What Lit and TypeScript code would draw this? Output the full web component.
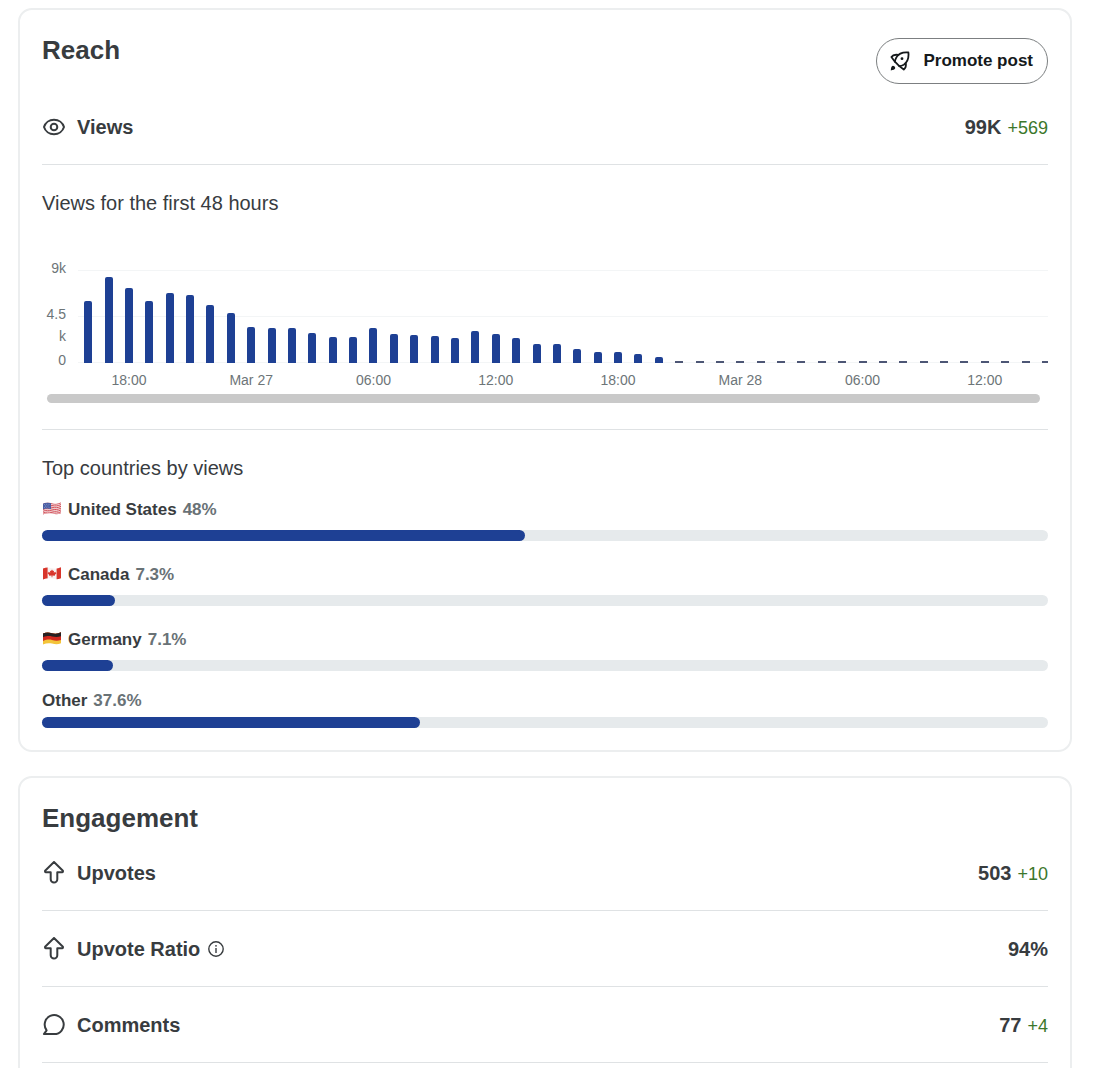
import { LitElement, html, svg, css, nothing } from "lit";
import { customElement, property } from "lit/decorators.js";

const MAX_VIEWS = 9;

/* Thousands of views per hour, starting at 16:00 on the first day. */
const HOURLY_VIEWS = [
  6.0, 8.3, 7.3, 6.0, 6.8, 6.6, 5.6, 4.8, 3.5, 3.4, 3.4, 2.9, 2.5, 2.5, 3.4, 2.8,
  2.7, 2.6, 2.4, 3.1, 2.8, 2.4, 1.8, 1.8, 1.4, 1.1, 1.1, 0.9, 0.6,
  ...new Array(19).fill(0),
];

const TICKS: Record<number, string> = {
  2: "18:00",
  8: "Mar 27",
  14: "06:00",
  20: "12:00",
  26: "18:00",
  32: "Mar 28",
  38: "06:00",
  44: "12:00",
};

const WAVE = "M1 2.6C4 1.2 7 1.4 10 2.2S16 2.8 19 1.2V12.2C16 13.8 13 13.4 10 12.6S4 12.2 1 13.6Z";

const flags: Record<string, unknown> = {
  us: svg`
    <clipPath id="us"><path d=${WAVE} /></clipPath>
    <g clip-path="url(#us)">
      <rect width="20" height="15" fill="#f3e6e6" />
      <g fill="none" stroke="#d4505a" stroke-width="1">
        <path d="M1 3.1C4 1.7 7 1.9 10 2.7S16 3.3 19 1.7" />
        <path d="M1 4.9C4 3.5 7 3.7 10 4.5S16 5.1 19 3.5" />
        <path d="M1 6.7C4 5.3 7 5.5 10 6.3S16 6.9 19 5.3" />
        <path d="M1 8.5C4 7.1 7 7.3 10 8.1S16 8.7 19 7.1" />
        <path d="M1 10.3C4 8.9 7 9.1 10 9.9S16 10.5 19 8.9" />
        <path d="M1 12.1C4 10.7 7 10.9 10 11.7S16 12.3 19 10.7" />
        <path d="M1 13.6C4 12.2 7 12.4 10 13.2S16 13.8 19 12.2" />
      </g>
      <path d="M1 2.4C4 1.2 7 1.4 9 2V8C6 7.2 4 7.2 1 8.2Z" fill="#4a5fa5" />
      <g fill="#c9d2ec">
        <circle cx="2.6" cy="3.6" r=".4" /><circle cx="4.8" cy="3.2" r=".4" />
        <circle cx="7" cy="3.3" r=".4" /><circle cx="3.7" cy="5" r=".4" />
        <circle cx="6" cy="4.9" r=".4" /><circle cx="2.6" cy="6.4" r=".4" />
        <circle cx="4.8" cy="6.1" r=".4" /><circle cx="7" cy="6.2" r=".4" />
      </g>
    </g>`,
  ca: svg`
    <clipPath id="ca"><path d=${WAVE} /></clipPath>
    <g clip-path="url(#ca)">
      <rect width="20" height="15" fill="#f7f2f1" />
      <rect width="5.6" height="15" fill="#d8352b" />
      <rect x="14.6" width="5.4" height="15" fill="#d8352b" />
      <path fill="#d8352b" d="M10 3.6l1 1.5 1-.4-.2 2 1.500-1 .5 1 .8.2-1.800 2.200.2.700-2.600-.2v1.700h-.800V9.600l-2.600.2.2-.7L5.400 6.900l.8-.2.500-1L8.200 6.700 8 4.700l1 .4z" />
    </g>`,
  de: svg`
    <clipPath id="de"><path d=${WAVE} /></clipPath>
    <g clip-path="url(#de)">
      <rect width="20" height="15" fill="#f3c43a" />
      <path fill="#d3291f" d="M0 0H20V8.600C16 10.200 13 9.800 10 9S4 8.600 0 10.400Z" />
      <path fill="#262223" d="M0 0H20V4.800C16 6.400 13 6 10 5.400S4 5 0 6.600Z" />
    </g>`,
};

const icons: Record<string, unknown> = {
  views: svg`
    <path d="M2 12C3.300 7.800 7.300 4.800 12 4.800s8.700 3 10 7.200c-1.300 4.200-5.300 7.200-10 7.200s-8.700-3-10-7.200Z" />
    <circle cx="12" cy="12" r="3.300" />`,
  upvote: svg`
    <path d="M12 1 20.900 9.700Q21.200 11.200 20.200 11.200H15.300V18.300a3.300 3.300 0 0 1-6.600 0V11.200H3.800Q2.800 11.200 3.100 9.700Z" />`,
  comment: svg`
    <path d="M12.200 21.100H1.900L4.600 17.300A9.500 9.500 0 1 1 12.200 21.100Z" />`,
};

const rocket = html`
  <svg class="rocket" viewBox="0 0 20 20" aria-hidden="true">
    <g fill="none" stroke="currentColor" stroke-width="1.800" stroke-linejoin="round" stroke-linecap="round">
      <path d="M18.400 1.500C12.800 1 8.600 2.600 6.400 6.400Q5 9 4.900 10.700L9.300 15.100Q11.500 15 13.800 13.700C17.400 11.200 19 7.200 18.400 1.500Z" />
      <path d="M8.400 4C5.300 3.400 2.600 4.200 1.400 6L4.900 10.700" />
      <path d="M15.800 12.100c.5 2.800-.3 5-2 6.400L9.300 15.100" />
    </g>
    <circle cx="12" cy="7.700" r="1.400" fill="currentColor" />
    <path fill="currentColor" d="M2.800 14.800c1.400 0 2.600 1.200 2.400 2.500-.2 1.300-2.200 1.900-4.400 2.100.1-2.300.6-4.300 2-4.600Z" />
  </svg>`;

@customElement("metric-row")
class MetricRow extends LitElement {
  @property() icon = "";
  @property() label = "";
  @property() value = "";
  @property() delta = "";
  @property({ type: Boolean }) info = false;

  static styles = css`
    :host {
      display: flex;
      align-items: center;
      justify-content: space-between;
      box-sizing: border-box;
      height: 76px;
      border-bottom: 1px solid #dfe2e4;
    }
    .name {
      display: flex;
      align-items: center;
      font-size: 20px;
      line-height: 24px;
      font-weight: 700;
    }
    .icon {
      width: 24px;
      height: 24px;
      margin-right: 11px;
      fill: none;
      stroke: currentColor;
      stroke-width: 2;
      stroke-linejoin: round;
      stroke-linecap: round;
    }
    .info {
      display: flex;
      margin: 0 0 0 8px;
      padding: 0;
      border: 0;
      background: none;
      color: inherit;
      cursor: pointer;
    }
    .info svg {
      width: 16px;
      height: 16px;
    }
    .figures {
      display: flex;
      align-items: baseline;
      gap: 6px;
    }
    .value {
      font-size: 20px;
      line-height: 24px;
      font-weight: 700;
    }
    .delta {
      font-size: 18px;
      line-height: 20px;
      color: #3c772b;
    }
  `;

  render() {
    return html`
      <div class="name">
        <svg class="icon" viewBox="0 0 24 24" aria-hidden="true">${icons[this.icon]}</svg>
        <span>${this.label}</span>
        ${this.info
          ? html`<button class="info" type="button" aria-label="About ${this.label}">
              <svg viewBox="0 0 16 16" aria-hidden="true">
                <circle cx="8" cy="8" r="7.200" fill="none" stroke="currentColor" stroke-width="1.400" />
                <circle cx="8" cy="4.800" r=".9" fill="currentColor" />
                <path d="M8 7v5" stroke="currentColor" stroke-width="1.400" />
              </svg>
            </button>`
          : nothing}
      </div>
      <div class="figures">
        <span class="value">${this.value}</span>
        ${this.delta ? html`<span class="delta">${this.delta}</span>` : nothing}
      </div>
    `;
  }
}

@customElement("views-chart")
class ViewsChart extends LitElement {
  static styles = css`
    :host {
      display: block;
      color: #6d7578;
      font-size: 14px;
    }
    .chart {
      display: flex;
      gap: 12px;
    }
    .axis {
      display: grid;
      grid-template-rows: 46px 46px 22px;
      width: 24px;
      line-height: 22px;
      text-align: right;
      word-break: break-all;
    }
    .plot {
      flex: 1;
      min-width: 0;
      overflow: hidden;
      padding-top: 13px;
    }
    .canvas {
      height: 93px;
      box-sizing: border-box;
      background:
        linear-gradient(#f3f5f6, #f3f5f6) 0 0 / 100% 1px no-repeat,
        linear-gradient(#f3f5f6, #f3f5f6) 0 46px / 100% 1px no-repeat,
        linear-gradient(#f3f5f6, #f3f5f6) 0 100% / 100% 1px no-repeat;
    }
    /* The last hour is only half in view at the right edge. */
    .track {
      display: grid;
      grid-template-columns: repeat(48, minmax(0, 1fr));
      width: calc(100% * 48 / 47.6);
    }
    .bars {
      height: 100%;
      align-items: end;
      justify-items: center;
    }
    .bar {
      width: 8px;
      min-height: 2px;
      border-radius: 2px 2px 0 0;
      background: #1e4094;
    }
    .bar.empty {
      border-radius: 0;
      background: #4d5675;
    }
    .ticks {
      margin-top: 7px;
      line-height: 20px;
      height: 20px;
    }
    .tick {
      display: flex;
      justify-content: center;
      white-space: nowrap;
    }
    .scroll {
      height: 9px;
      margin: 4px 8px 0 5px;
      border-radius: 5px;
      background: #c9c9c9;
    }
  `;

  render() {
    return html`
      <div class="chart" role="img" aria-label="Views for the first 48 hours">
        <div class="axis"><span>9k</span><span>4.5k</span><span>0</span></div>
        <div class="plot">
          <div class="canvas">
            <div class="track bars">
              ${HOURLY_VIEWS.map(
                (v) => html`<div class="bar ${v ? "" : "empty"}" style="height:${(v / MAX_VIEWS) * 100}%"></div>`
              )}
            </div>
          </div>
          <div class="track ticks">
            ${HOURLY_VIEWS.map((_, i) => html`<span class="tick">${TICKS[i] ?? ""}</span>`)}
          </div>
        </div>
      </div>
      <div class="scroll"></div>
    `;
  }
}

@customElement("country-bar")
class CountryBar extends LitElement {
  @property() flag = "";
  @property() name = "";
  @property({ type: Number }) percent = 0;

  static styles = css`
    :host {
      display: block;
    }
    .label {
      display: flex;
      align-items: center;
      gap: 6px;
      height: 19px;
      margin-bottom: 7px;
      font-size: 17px;
      line-height: 19px;
      font-weight: 700;
    }
    .flagged {
      height: 27px;
    }
    .flag {
      width: 20px;
      height: 15px;
      margin-bottom: 3px;
    }
    .percent {
      color: #697276;
    }
    .bar {
      height: 11px;
      border-radius: 6px;
      background: #e6eaec;
    }
    .fill {
      height: 100%;
      border-radius: 6px;
      background: #1e4094;
    }
  `;

  render() {
    return html`
      <div class="label ${this.flag ? "flagged" : ""}">
        ${this.flag
          ? html`<svg class="flag" viewBox="0 0 20 15" aria-hidden="true">${flags[this.flag]}</svg>`
          : nothing}
        <span>${this.name}</span>
        <span class="percent">${this.percent}%</span>
      </div>
      <div class="bar"><div class="fill" style="width:${this.percent}%"></div></div>
    `;
  }
}

@customElement("app-root")
class AppRoot extends LitElement {
  static styles = css`
    :host {
      display: flex;
      flex-direction: column;
      gap: 24px;
      box-sizing: border-box;
      height: 100vh;
      overflow-y: auto;
      scrollbar-width: none;
      padding: 8px 28px 8px 18px;
      background: #fff;
      color: #383c3f;
      font-family: "Liberation Sans", Arial, Helvetica, sans-serif;
    }
    .card {
      flex: none;
      padding: 24px 22px 22px;
      border: 2px solid #eceeef;
      border-radius: 14px;
    }
    .header {
      display: flex;
      align-items: flex-start;
      justify-content: space-between;
    }
    h2 {
      margin: 0 0 1px;
      font-size: 26px;
      line-height: 32px;
      font-weight: 700;
    }
    h3 {
      margin: 0;
      padding-top: 26px;
      font-size: 20px;
      line-height: 24px;
      font-weight: 400;
    }
    .promote {
      display: flex;
      align-items: center;
      gap: 13px;
      height: 46px;
      margin: 4px 0 5px;
      padding: 0 14px 0 13px;
      border: 1px solid #7c7f81;
      border-radius: 23px;
      background: #fff;
      color: #15191b;
      font: 700 17px/20px "Liberation Sans", Arial, Helvetica, sans-serif;
      cursor: pointer;
    }
    .rocket {
      width: 20px;
      height: 20px;
    }
    .first-hours {
      padding-bottom: 26px;
      border-bottom: 1px solid #dfe2e4;
    }
    .first-hours h3 {
      margin-bottom: 42px;
    }
    .countries {
      display: flex;
      flex-direction: column;
      gap: 20px;
      margin-top: 16px;
    }
  `;

  render() {
    return html`
      <section class="card">
        <div class="header">
          <h2>Reach</h2>
          <button class="promote" type="button">${rocket}<span>Promote post</span></button>
        </div>
        <metric-row icon="views" label="Views" value="99K" delta="+569"></metric-row>
        <div class="first-hours">
          <h3>Views for the first 48 hours</h3>
          <views-chart></views-chart>
        </div>
        <h3>Top countries by views</h3>
        <div class="countries">
          <country-bar flag="us" name="United States" percent="48"></country-bar>
          <country-bar flag="ca" name="Canada" percent="7.3"></country-bar>
          <country-bar flag="de" name="Germany" percent="7.1"></country-bar>
          <country-bar name="Other" percent="37.6"></country-bar>
        </div>
      </section>
      <section class="card">
        <h2>Engagement</h2>
        <metric-row icon="upvote" label="Upvotes" value="503" delta="+10"></metric-row>
        <metric-row icon="upvote" label="Upvote Ratio" value="94%" info></metric-row>
        <metric-row icon="comment" label="Comments" value="77" delta="+4"></metric-row>
      </section>
    `;
  }
}
